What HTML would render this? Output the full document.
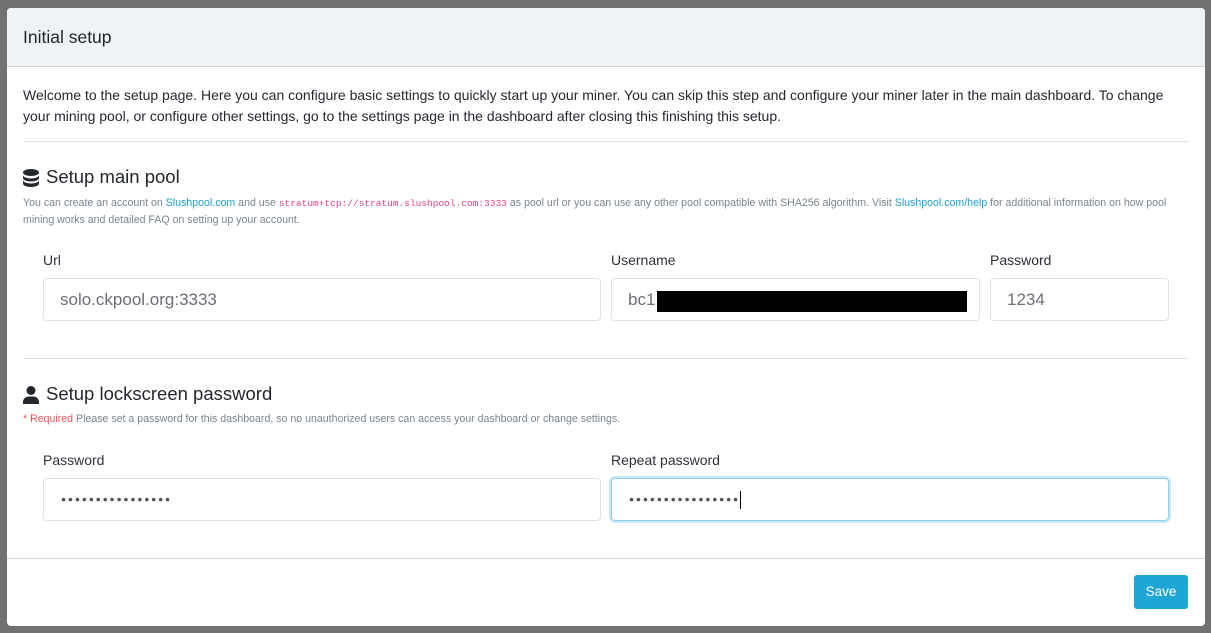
<!DOCTYPE html>
<html><head><style>
body{margin:0;width:1211px;height:633px;background:#707170;font-family:"Liberation Sans",sans-serif;position:relative;overflow:hidden}
.m{position:absolute;left:7px;top:8px;width:1198px;height:618px;background:#fff;border-radius:4px;overflow:hidden}
.a{position:absolute;white-space:nowrap}
.hd{position:absolute;left:0;top:0;width:100%;height:58px;background:#f0f3f6;border-bottom:1px solid #d0d4da}
.hr{position:absolute;left:16px;width:1166px;height:1px;background:#dfe2e6}
.in{position:absolute;height:41px;border:1px solid #dfe2e6;border-radius:4px;box-sizing:content-box;font-size:17px;color:#6b6f75;line-height:41px;padding-left:16px}
.lb{font-size:14px;color:#2d3238}
.h{font-size:18.5px;color:#23272c}
.s{font-size:10.5px;color:#7b8590}
.l{color:#1c9fd0}
.dots{letter-spacing:1.8px;font-size:8.5px;color:#555;padding-left:17px}
</style></head><body>
<div class="m">
<div class="hd"></div>
<div class="a" style="left:16px;top:19px;font-size:17.5px;color:#1f2429">Initial setup</div>
<div class="a" style="left:16px;top:77px;font-size:14px;line-height:21px;color:#2a2630;white-space:normal;width:1160px">Welcome to the setup page. Here you can configure basic settings to quickly start up your miner. You can skip this step and configure your miner later in the main dashboard. To change your mining pool, or configure other settings, go to the settings page in the dashboard after closing this finishing this setup.</div>
<div class="hr" style="top:133px"></div>
<svg class="a" style="left:16px;top:161px" width="16" height="18" viewBox="0 0 16 18"><ellipse cx="8" cy="3.5" rx="8" ry="3.5" fill="#23272c"/><path d="M0 6v3c0 2 3.6 3.5 8 3.5s8-1.5 8-3.5V6c0 2-3.6 3.5-8 3.5S0 8 0 6zM0 11v3.5C0 16.5 3.6 18 8 18s8-1.5 8-3.5V11c0 2-3.6 3.5-8 3.5S0 13 0 11z" fill="#23272c"/></svg>
<div class="a h" style="left:39px;top:158px">Setup main pool</div>
<div class="a s" style="left:16px;top:187px;line-height:16px;white-space:normal;width:1165px;font-size:10.6px">You can create an account on <span class="l">Slushpool.com</span> and use <span style="font-family:'Liberation Mono',monospace;color:#e83e8c;font-size:9.5px">stratum+tcp://stratum.slushpool.com:3333</span> as pool url or you can use any other pool compatible with SHA256 algorithm. Visit <span class="l">Slushpool.com/help</span> for additional information on how pool mining works and detailed FAQ on setting up your account.</div>
<div class="a lb" style="left:36px;top:244px">Url</div>
<div class="a lb" style="left:604px;top:244px">Username</div>
<div class="a lb" style="left:983px;top:244px">Password</div>
<div class="in" style="left:36px;top:270px;width:540px">solo.ckpool.org:3333</div>
<div class="in" style="left:604px;top:270px;width:351px">bc1<span style="position:absolute;left:45px;top:12px;width:310px;height:21px;background:#000"></span></div>
<div class="in" style="left:983px;top:270px;width:161px">1234</div>
<div class="hr" style="top:350px"></div>
<svg class="a" style="left:16px;top:378px" width="16" height="18" viewBox="0 0 16 18"><circle cx="8" cy="4.5" r="4.5" fill="#23272c"/><path d="M0 18v-2c0-3 2.5-5.5 5.5-5.5h5c3 0 5.5 2.5 5.5 5.5v2z" fill="#23272c"/></svg>
<div class="a h" style="left:39px;top:375px">Setup lockscreen password</div>
<div class="a s" style="left:16px;top:405px;font-size:10.6px"><span style="color:#f0555a">* Required</span> Please set a password for this dashboard, so no unauthorized users can access your dashboard or change settings.</div>
<div class="a lb" style="left:36px;top:444px">Password</div>
<div class="a lb" style="left:604px;top:444px">Repeat password</div>
<div class="in dots" style="left:36px;top:470px;width:539px">●●●●●●●●●●●●●●●●</div>
<div class="in dots" style="left:604px;top:470px;width:539px;border-color:#8dd0ec;box-shadow:0 0 0 2px #c8e9f7">●●●●●●●●●●●●●●●●<span style="display:inline-block;width:1px;height:18px;background:#000;vertical-align:middle"></span></div>
<div style="position:absolute;left:0;top:550px;width:100%;height:1px;background:#cfd4da"></div>
<div class="a" style="left:1127px;top:567px;width:54px;height:34px;background:#1fa6d6;border-radius:3px;color:#fff;font-size:13.5px;line-height:34px;text-align:center">Save</div>
</div>
</body></html>
